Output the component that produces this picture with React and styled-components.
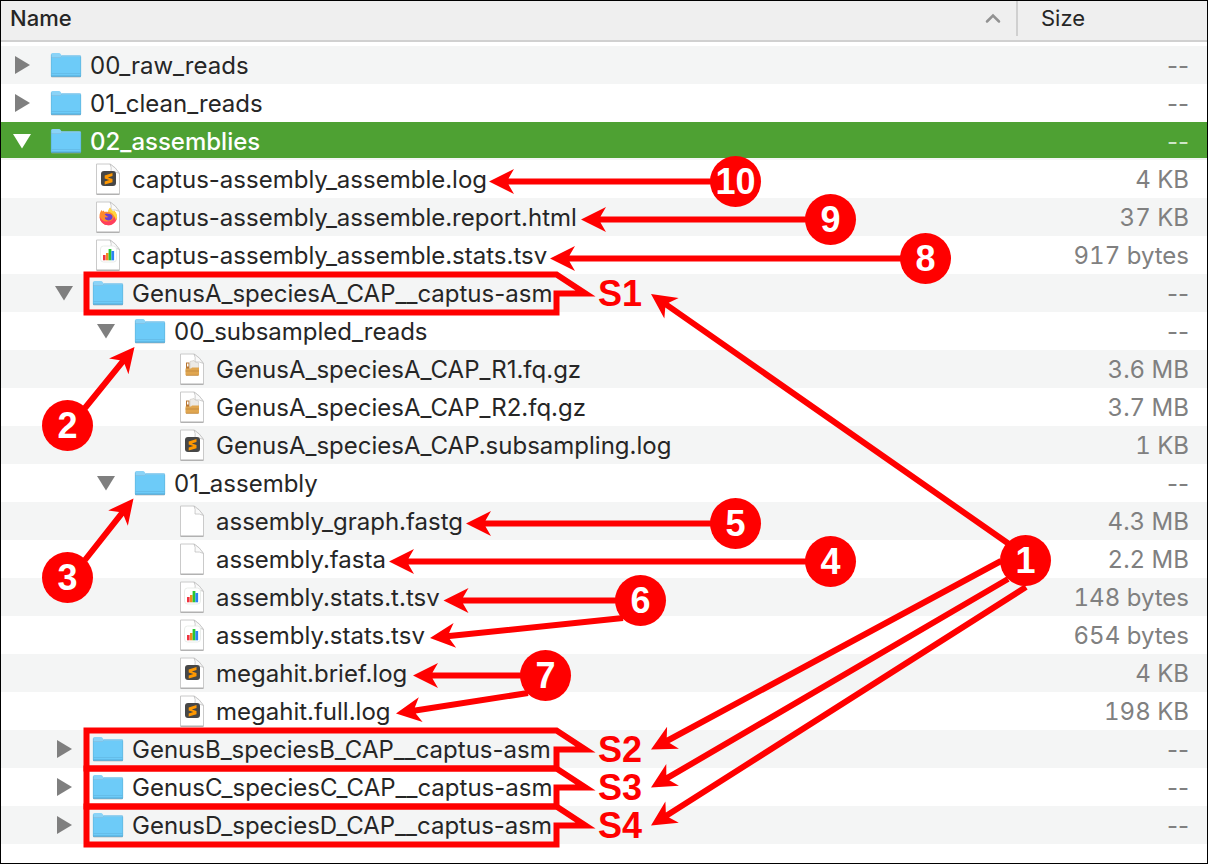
import React from "react";
import styled, { createGlobalStyle } from "styled-components";

const GlobalStyle = createGlobalStyle`
  *, *::before, *::after { box-sizing: border-box; }
  body { margin: 0; background: #fff; }
`;

const RED = "#ff0000";

const Page = styled.main`
  position: relative;
  font-family: Inter, "Liberation Sans", sans-serif;
  font-size: 24px;
  color: #262626;
`;

const Window = styled.section`
  min-height: 100vh;
  padding-bottom: 18px;
  border: 1px solid #000;
  background: #fff;
`;

const FileTable = styled.table`
  width: 100%;
  border-spacing: 0;
  table-layout: fixed;
`;

const NameColumn = styled.col``;
const SizeColumn = styled.col`
  width: 191px;
`;

const HeaderCell = styled.th`
  height: 41px;
  padding: 0;
  background: #efefef;
  border-bottom: 2px solid #d0d0d0;
  font-weight: ${(p) => (p.$active ? 500 : 400)};
  text-align: left;
  vertical-align: top;
`;

const HeaderButton = styled.button`
  display: flex;
  align-items: center;
  justify-content: space-between;
  width: 100%;
  height: 35px;
  padding: ${(p) => (p.$divided ? "0 0 2px 23px" : "0 15px 2px 9px")};
  border: 0;
  border-left: ${(p) => (p.$divided ? "2px solid #d0d0d0" : "0")};
  background: none;
  color: inherit;
  font: inherit;
  font-size: 22px;
`;

const Body = styled.tbody`
  &::before {
    content: "";
    display: table-row;
    height: 4px;
  }
`;

const Row = styled.tr`
  height: 38px;
  background: ${(p) => (p.$selected ? "linear-gradient(#4ea133 36px, #f4f5f5 36px)" : "#fff")};
  color: ${(p) => (p.$selected ? "#fff" : "#262626")};
  font-weight: ${(p) => (p.$selected ? 500 : 400)};
  &:nth-child(odd) {
    background-color: #f4f5f5;
  }
`;

const NameCell = styled.td`
  padding: 0 0 0 ${(p) => 11 + p.$level * 42}px;
`;

const NameLine = styled.div`
  display: flex;
  align-items: center;
  height: 38px;
  white-space: nowrap;
`;

const ToggleSlot = styled.span`
  display: flex;
  flex: none;
  width: 37px;
`;

const Toggle = styled.button`
  display: flex;
  padding: 0;
  border: 0;
  background: none;
  color: ${(p) => (p.$selected ? "#fff" : "#7f7f7f")};
`;

const IconSlot = styled.span`
  display: flex;
  flex: none;
  justify-content: center;
  width: 34px;
  margin-right: 7px;
`;

const SizeCell = styled.td`
  padding: 2px 18px 0 0;
  color: ${(p) => (p.$selected ? "#cfe6c8" : "#808080")};
  font-weight: 400;
  font-variant-numeric: ${(p) => (p.$empty ? "normal" : "tabular-nums")};
  line-height: 36px;
  text-align: right;
  white-space: nowrap;
`;

const Overlay = styled.div`
  position: absolute;
  inset: 0;
  overflow: hidden;
  pointer-events: none;
  font-family: "Liberation Sans", Arial, sans-serif;
  font-size: 36px;
  font-weight: 700;
`;

const Drawing = styled.svg`
  position: absolute;
  inset: 0;
  width: 100%;
  height: 100%;
`;

const Badge = styled.span`
  position: absolute;
  left: ${(p) => p.$x}px;
  top: ${(p) => p.$y}px;
  width: 51px;
  height: 51px;
  border-radius: 50%;
  background: ${RED};
  color: #fff;
  line-height: 51px;
  text-align: center;
`;

const SampleTag = styled.span`
  position: absolute;
  left: 598px;
  top: ${(p) => p.$y}px;
  color: ${RED};
  line-height: 38px;
`;

function Triangle({ open }) {
  return (
    <svg width="20" height="20" viewBox="0 0 20 20" aria-hidden="true">
      <path d={open ? "M1 3h18L10 17.500z" : "M3 1v18L18 10z"} fill="currentColor" />
    </svg>
  );
}

function Folder() {
  return (
    <svg width="32" height="26" viewBox="0 0 32 26" aria-hidden="true">
      <path d="M1 24.200V2.500q0-1.500 1.500-1.500h6.500q1 0 1.600.9l.9 1.300h18q1.500 0 1.500 1.500v19.500z" fill="#8ad3f7" />
      <path d="M1 6h9l2-1.200h19v18.700q0 .8-.8.8H1.800q-.8 0-.8-.8z" fill="#6dcbf8" />
      <path d="M1 5.500h9.500l1.500-1.500h19" fill="none" stroke="#7bbcdf" strokeWidth=".7" />
      <path d="M1.500 21.500h29" stroke="#62b7e3" strokeWidth=".7" />
      <path d="M1 24.200h30" stroke="#4fa3cf" strokeWidth="1.200" />
      <path d="M1.500 25.400h29" stroke="#aaa" strokeOpacity=".45" strokeWidth=".8" />
      <path d="M1.300 2.500v21.500M30.700 4.500v19.500" stroke="#5eb0d8" strokeWidth=".6" />
    </svg>
  );
}

function SublimeMark() {
  return (
    <g>
      <rect x="6" y="8" width="15" height="15" rx="3" fill="#474747" />
      <path d="M17.500 10v3l-4.700 1.500 4.700 1.500v3.300L9.700 21.600v-3l4.600-1.500-4.600-1.600v-3.100z" fill="#ff9800" />
    </g>
  );
}

function FirefoxMark() {
  return (
    <g>
      <path d="M13.500 24.300a9 9 0 0 1-9-9c0-2.600.9-5 2.200-6.300l.8 1.600 1.200-1.200.8 1.600c1-.4 2.600-.3 3.800.1 0-1.800.9-3.400 2-4.100 0 1.900 1.800 2.500 3 4l.7-1.300c1.700 1.400 2.800 3.500 2.800 5.800a9 9 0 0 1-8.500 8.800z" fill="#ff8a2b" />
      <path d="M4.600 15.500c1.600 3.600 3.900 5 6.800 5 4.200 0 6.500-1.600 7.600-4.300l3.200.3c-.8 4.500-4.300 7.800-8.700 7.800-5 0-8.900-3.800-8.900-8.800z" fill="#ff3f5e" />
      <path d="M13.200 10.800c0-1.800.9-3.400 2.100-4.200.1 1.900 1.900 2.600 3 4.100l.7-1.300c2.600 2.200 4.200 6.200 2 10.200-.9-3.700-3-8.100-7.800-8.800z" fill="#ffd53d" />
      <path d="M9.600 13.400c1.500-1.200 3-.8 4.100-.3 3 0 4.500 2 3.600 4.200-1.100 2.500-5.500 2.900-7.200.4-.5-.9.100-1.500 1.200-1.300l2.300-.3c-1.700-.9-2.400-1.400-4-2.700z" fill="#6a3fd0" />
    </g>
  );
}

function ChartMark() {
  return (
    <g>
      <rect x="5.500" y="7" width="16" height="16" rx="3" fill="#fff" stroke="#e4e8e4" strokeWidth=".8" />
      <path d="M8 16h2.600v5.300H8z" fill="#ef3340" />
      <path d="M11 14h2.600v7.300H11z" fill="#f58a1f" />
      <path d="M13.600 10h2.800v11.300h-2.800z" fill="#28c732" />
      <path d="M16.400 12h2.700v9.300h-2.700z" fill="#2b83f2" />
    </g>
  );
}

function ArchiveMark() {
  return (
    <g>
      <path d="M7 9.500h3.500v8H7z" fill="#b87632" />
      <path d="M8 10.500h1.500v3H8z" fill="#fff" />
      <path d="M11 8.500l4-1 1 1.500 3.500 1v7H11z" fill="#eceae6" stroke="#c9c6bf" strokeWidth=".6" />
      <path d="M6.500 15.500h5.500l1-1h7v7.300q0 .7-.7.700H7.200q-.7 0-.7-.7z" fill="#e0a650" />
      <path d="M6.500 18h13.500M7 22.300h12.500" stroke="#b98139" strokeWidth=".7" />
    </g>
  );
}

const marks = { log: SublimeMark, html: FirefoxMark, tsv: ChartMark, gz: ArchiveMark };

function Document({ kind }) {
  const Mark = marks[kind];
  return (
    <svg width="26" height="33" viewBox="0 0 26 33" aria-hidden="true">
      <path d="M1.500 1h13.500q5 2.500 9.500 9.500v20.500h-23z" fill="#fff" stroke="#cacaca" strokeWidth="1" />
      <path d="M1.500 31.300h23" stroke="#a6a6a6" strokeWidth="1" />
      <path d="M15 1q1.800 3 1 8 4.500-.7 8.500 1.500-3.500-6-9.500-9.500z" fill="#fafafa" stroke="#b9b9b9" strokeWidth=".7" />
      {Mark ? <Mark /> : null}
    </svg>
  );
}

const files = [
  { name: "00_raw_reads", level: 0, kind: "folder", size: "--" },
  { name: "01_clean_reads", level: 0, kind: "folder", size: "--" },
  { name: "02_assemblies", level: 0, kind: "folder", open: true, selected: true, size: "--" },
  { name: "captus-assembly_assemble.log", level: 1, kind: "log", size: "4 KB" },
  { name: "captus-assembly_assemble.report.html", level: 1, kind: "html", size: "37 KB" },
  { name: "captus-assembly_assemble.stats.tsv", level: 1, kind: "tsv", size: "917 bytes" },
  { name: "GenusA_speciesA_CAP__captus-asm", level: 1, kind: "folder", open: true, size: "--" },
  { name: "00_subsampled_reads", level: 2, kind: "folder", open: true, size: "--" },
  { name: "GenusA_speciesA_CAP_R1.fq.gz", level: 3, kind: "gz", size: "3.6 MB" },
  { name: "GenusA_speciesA_CAP_R2.fq.gz", level: 3, kind: "gz", size: "3.7 MB" },
  { name: "GenusA_speciesA_CAP.subsampling.log", level: 3, kind: "log", size: "1 KB" },
  { name: "01_assembly", level: 2, kind: "folder", open: true, size: "--" },
  { name: "assembly_graph.fastg", level: 3, kind: "plain", size: "4.3 MB" },
  { name: "assembly.fasta", level: 3, kind: "plain", size: "2.2 MB" },
  { name: "assembly.stats.t.tsv", level: 3, kind: "tsv", size: "148 bytes" },
  { name: "assembly.stats.tsv", level: 3, kind: "tsv", size: "654 bytes" },
  { name: "megahit.brief.log", level: 3, kind: "log", size: "4 KB" },
  { name: "megahit.full.log", level: 3, kind: "log", size: "198 KB" },
  { name: "GenusB_speciesB_CAP__captus-asm", level: 1, kind: "folder", size: "--" },
  { name: "GenusC_speciesC_CAP__captus-asm", level: 1, kind: "folder", size: "--" },
  { name: "GenusD_speciesD_CAP__captus-asm", level: 1, kind: "folder", size: "--" },
];

const arrows = [
  [715, 181.5, 489, 181.5],
  [810, 219.5, 581, 219.5],
  [905, 258.5, 550, 258.5],
  [1009, 544, 651, 294],
  [1001, 561, 651, 749.5],
  [1008, 579, 651, 787.5],
  [1026, 587, 651, 825.5],
  [85, 408, 134.5, 347],
  [85, 560, 133.5, 498.5],
  [715, 523.5, 466, 523.5],
  [810, 561.5, 389, 561.5],
  [620, 600.5, 443.5, 600.5],
  [623, 618, 430, 638],
  [525, 675.5, 413, 675.5],
  [528, 693, 396, 713.5],
];

const badges = [
  [10, 710, 156],
  [9, 805, 194],
  [8, 900, 233],
  [2, 42, 400],
  [3, 42, 552],
  [5, 710, 498],
  [4, 805, 536],
  [1, 1000, 535],
  [6, 615, 575],
  [7, 520, 650],
];

const samples = [
  ["S1", 275],
  ["S2", 731],
  ["S3", 769],
  ["S4", 807],
];

function Arrow({ line: [x1, y1, x2, y2] }) {
  const length = Math.hypot(x2 - x1, y2 - y1);
  const angle = (Math.atan2(y2 - y1, x2 - x1) * 180) / Math.PI;
  return (
    <path
      transform={`translate(${x2} ${y2}) rotate(${angle})`}
      d={`M0 0L-25 -12.500L-19.500 -3H${-length}V3H-19.500L-25 12.500z`}
      fill={RED}
    />
  );
}

function Annotations() {
  return (
    <Overlay>
      <Drawing aria-hidden="true">
        {samples.map(([name, y]) => (
          <path
            key={name}
            transform={`translate(0 ${y})`}
            d="M86.500 -.5H556.500L585.500 18.500H556.500V37.500H86.500z"
            fill="none"
            stroke={RED}
            strokeWidth="6"
            strokeMiterlimit="10"
          />
        ))}
        {arrows.map((line) => (
          <Arrow key={line.join()} line={line} />
        ))}
      </Drawing>
      {samples.map(([name, y]) => (
        <SampleTag key={name} $y={y}>
          {name}
        </SampleTag>
      ))}
      {badges.map(([label, x, y]) => (
        <Badge key={label} $x={x} $y={y}>
          {label}
        </Badge>
      ))}
    </Overlay>
  );
}

function FileRow({ file }) {
  const { name, level, kind, open, selected, size } = file;
  const isFolder = kind === "folder";
  return (
    <Row $selected={selected} aria-selected={selected}>
      <NameCell $level={level}>
        <NameLine>
          <ToggleSlot>
            {isFolder && (
              <Toggle type="button" $selected={selected} aria-label={name} aria-expanded={Boolean(open)}>
                <Triangle open={open} />
              </Toggle>
            )}
          </ToggleSlot>
          <IconSlot>{isFolder ? <Folder /> : <Document kind={kind} />}</IconSlot>
          {name}
        </NameLine>
      </NameCell>
      <SizeCell $selected={selected} $empty={isFolder}>
        {size}
      </SizeCell>
    </Row>
  );
}

export default function App() {
  return (
    <Page>
      <GlobalStyle />
      <Window>
        <FileTable>
          <colgroup>
            <NameColumn />
            <SizeColumn />
          </colgroup>
          <thead>
            <tr>
              <HeaderCell $active scope="col" aria-sort="ascending">
                <HeaderButton type="button">
                  Name
                  <svg width="16" height="12" viewBox="0 0 16 12" aria-hidden="true">
                    <path d="M2 9.500l6-6 6 6" fill="none" stroke="#929292" strokeWidth="2.500" strokeLinecap="round" />
                  </svg>
                </HeaderButton>
              </HeaderCell>
              <HeaderCell scope="col">
                <HeaderButton type="button" $divided>
                  Size
                </HeaderButton>
              </HeaderCell>
            </tr>
          </thead>
          <Body>
            {files.map((file) => (
              <FileRow key={file.name} file={file} />
            ))}
          </Body>
        </FileTable>
      </Window>
      <Annotations />
    </Page>
  );
}
